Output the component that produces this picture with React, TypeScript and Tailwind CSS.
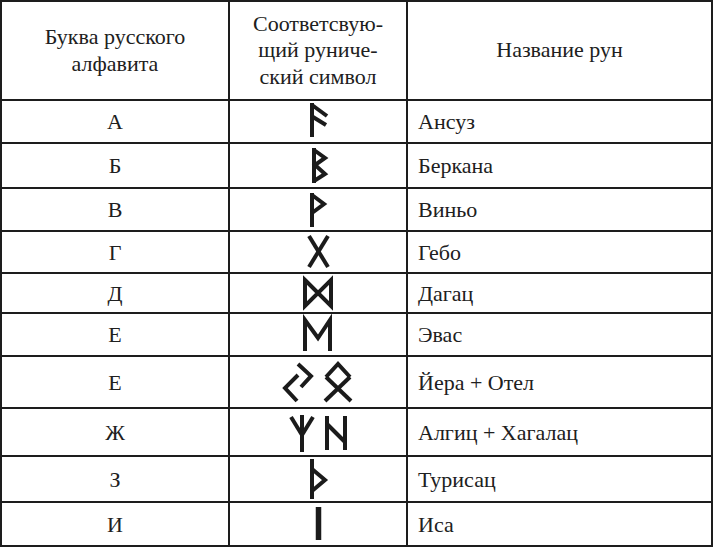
import React from "react";

type Row = { letter: string; name: string; h: string; ch: number; rune: React.ReactNode };

const S = "#1b1b1b";

const P = (d: string, w = 4) => (
  <path d={d} fill="none" stroke={S} strokeWidth={w} strokeLinejoin="miter" strokeLinecap="butt" />
);

const rows: Row[] = [
  { letter: "А", name: "Ансуз", h: "h-[43px]", ch: 41, rune: <>{P("M82 2 V36")}{P("M82 4 L97 15")}{P("M83 16 L96 24")}</> },
  { letter: "Б", name: "Беркана", h: "h-[45px]", ch: 43, rune: <>{P("M84 4 V39")}{P("M84 6 L95 14 L85 21 L95 30 L84 37")}</> },
  { letter: "В", name: "Виньо", h: "h-[43px]", ch: 41, rune: <>{P("M82 4 V38")}{P("M82 6 L94 15 L82 24")}</> },
  { letter: "Г", name: "Гебо", h: "h-[42px]", ch: 40, rune: <>{P("M79 4 L98 35")}{P("M98 4 L79 35")}</> },
  { letter: "Д", name: "Дагац", h: "h-[40px]", ch: 38, rune: <>{P("M75 6 L101 32 V6 L75 32 Z")}</> },
  { letter: "Е", name: "Эвас", h: "h-[43px]", ch: 41, rune: <>{P("M75 37 V6 L88 24 L100 6 V37")}</> },
  { letter: "Е", name: "Йера + Отел", h: "h-[52px]", ch: 50, rune: <>{P("M68 18 L55 31 L67 44")}{P("M68 7 L81 19 L71 30")}{P("M96 20 L108 7 L120 20")}{P("M96 20 L121 44")}{P("M120 20 L95 44")}</> },
  { letter: "Ж", name: "Алгиц + Хагалац", h: "h-[48px]", ch: 46, rune: <>{P("M72 6 V43")}{P("M72 26 L61 8")}{P("M72 26 L83 8")}{P("M97 7 V41")}{P("M115 7 V41")}{P("M97 15 L115 33")}</> },
  { letter: "З", name: "Турисац", h: "h-[46px]", ch: 44, rune: <>{P("M82 2 V42")}{P("M82 12 L95 23 L82 34")}</> },
  { letter: "И", name: "Иса", h: "h-[42px]", ch: 42, rune: <>{P("M88.5 4 V37", 5.5)}</> },
];

export default function App() {
  return (
    <div
      className="w-[713px] h-[547px] bg-white text-[#202020]"
      style={{ fontFamily: '"Liberation Serif", "DejaVu Serif", serif' }}
    >
      <div className="w-[713px] h-[547px] border-2 border-[#1d1d1d] flex flex-col">
        <div className="h-[99px] flex border-b-2 border-[#1d1d1d] text-[22px] leading-[26.5px]">
          <div className="w-[228px] border-r-2 border-[#1d1d1d] flex items-center justify-center text-center">
            <div>Буква русского<br />алфавита</div>
          </div>
          <div className="w-[178px] border-r-2 border-[#1d1d1d] flex items-center justify-center text-center">
            <div>Соответсвую-<br />щий руниче-<br />ский символ</div>
          </div>
          <div className="flex-1 flex items-center justify-center">Название рун</div>
        </div>
        {rows.map((r, i) => (
          <div
            key={i}
            className={`${r.h} flex text-[22px] ${i < rows.length - 1 ? "border-b-2 border-[#1d1d1d]" : ""}`}
          >
            <div className="w-[228px] border-r-2 border-[#1d1d1d] flex items-center justify-center">{r.letter}</div>
            <div className="w-[178px] border-r-2 border-[#1d1d1d]">
              <svg width="176" height={r.ch} viewBox={`0 0 176 ${r.ch}`} className="block">
                {r.rune}
              </svg>
            </div>
            <div className="flex-1 flex items-center pl-[10px]">{r.name}</div>
          </div>
        ))}
      </div>
    </div>
  );
}
